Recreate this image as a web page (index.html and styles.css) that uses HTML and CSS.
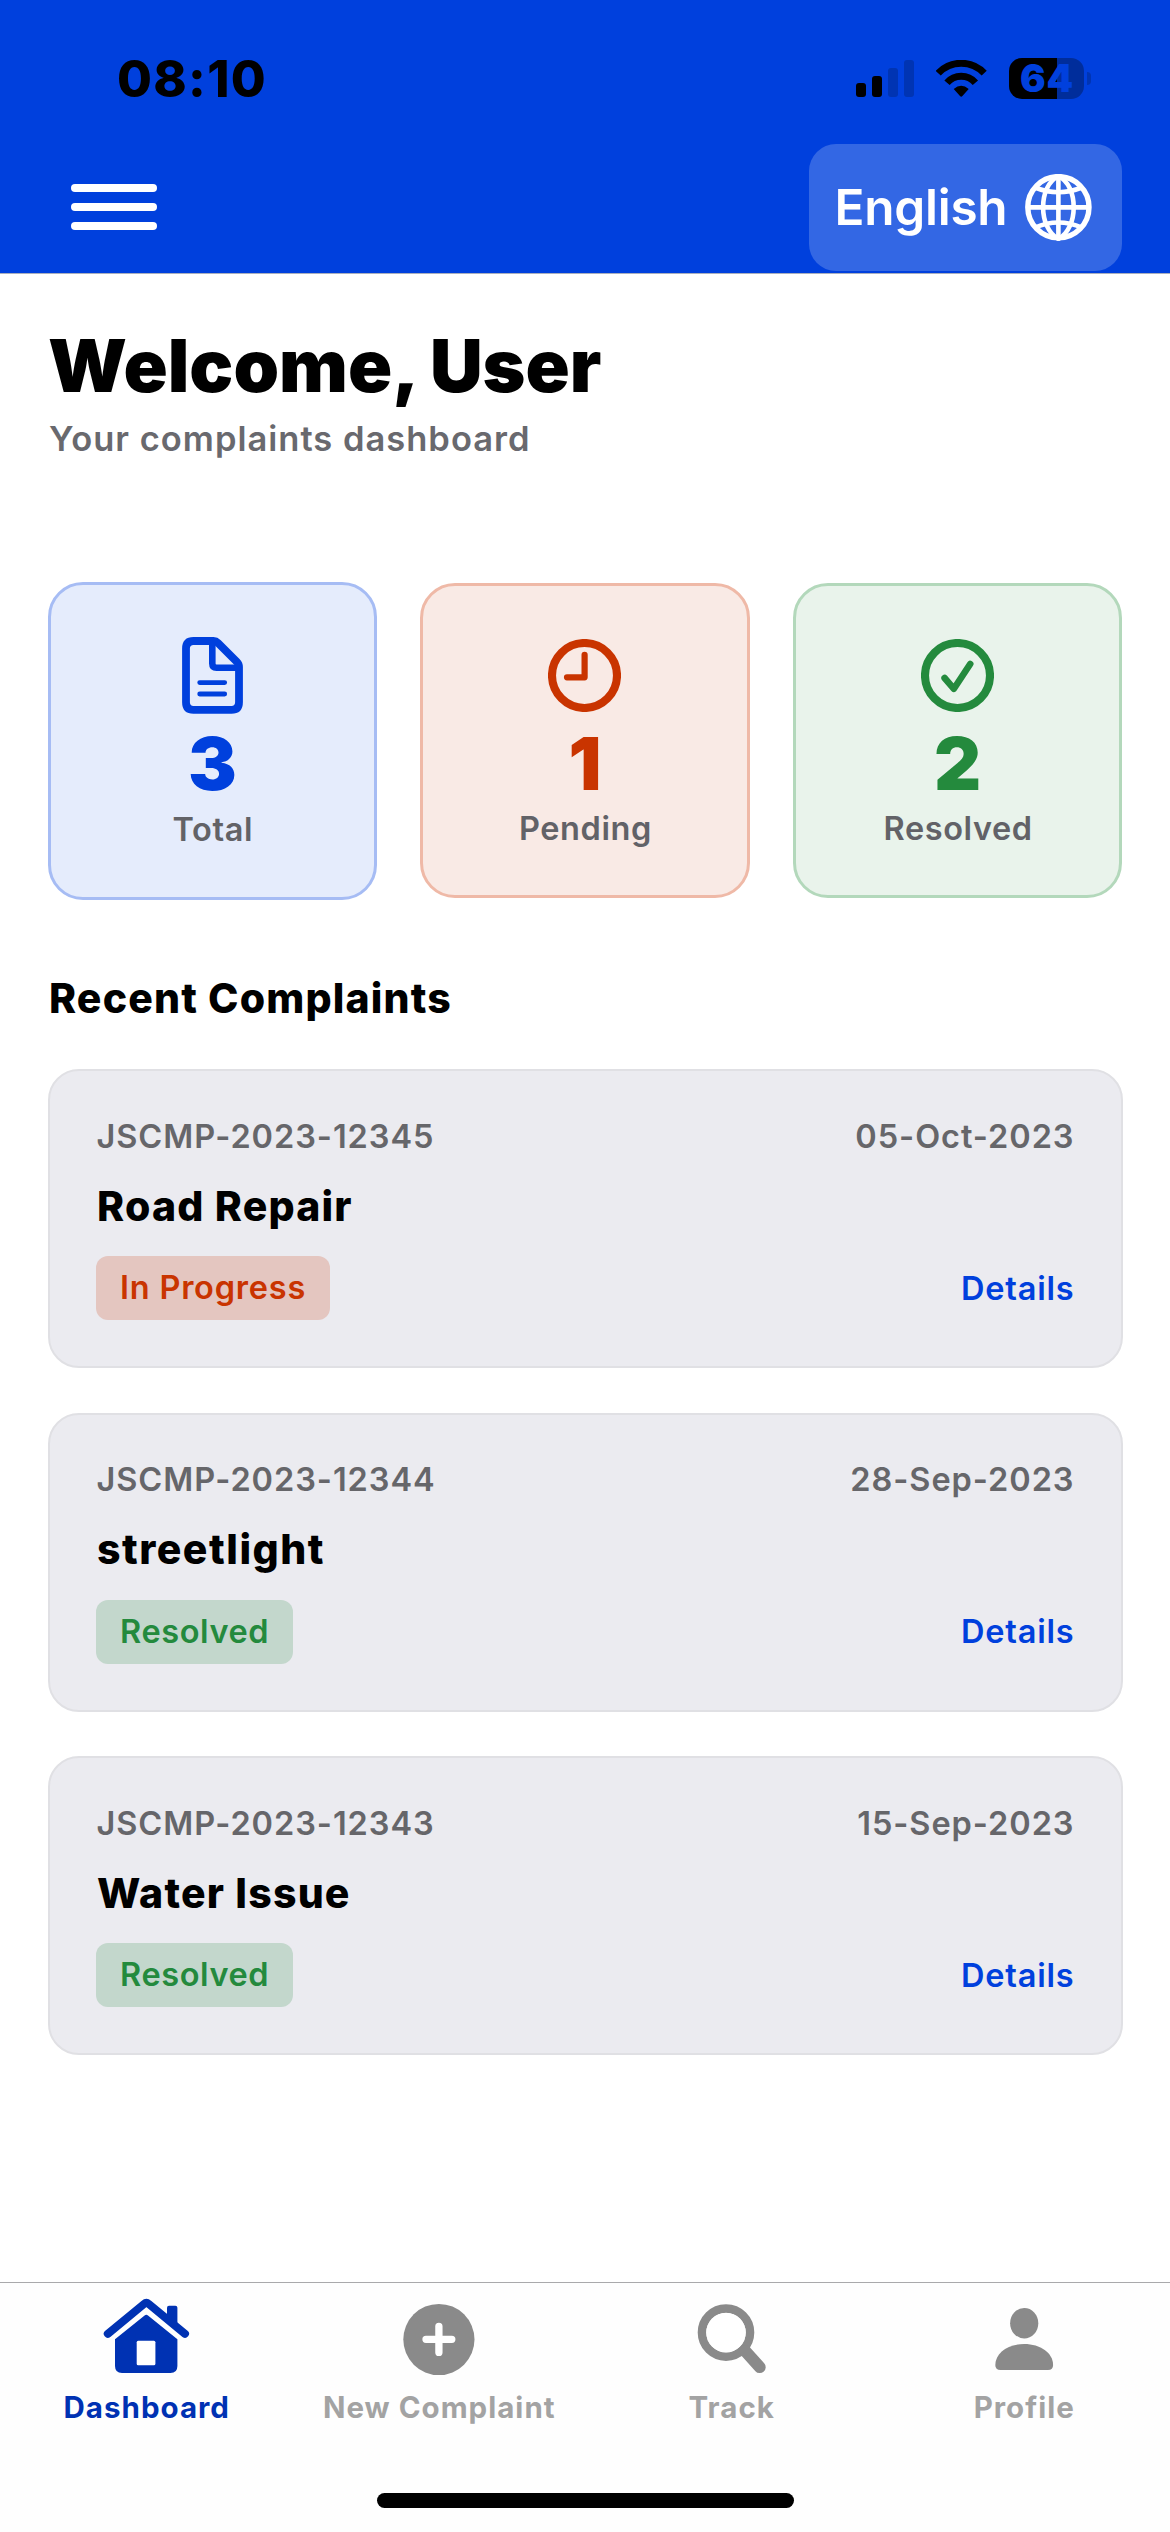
FILE: index.html
```html
<!DOCTYPE html>
<html lang="en">
<head>
<meta charset="utf-8">
<title>Complaints Dashboard</title>
<link rel="stylesheet" href="styles.css">
</head>
<body>
<div class="screen">
  <header class="header">
    <div class="statusbar">
      <span class="time">08:10</span>
      <div class="status-icons">
        <svg width="58" height="37" viewBox="0 0 58 37">
          <rect x="0" y="23" width="10" height="14" rx="3"/>
          <rect x="16" y="16" width="10" height="21" rx="3"/>
          <rect x="32" y="8" width="10" height="29" rx="3" fill="#0034b3"/>
          <rect x="48" y="0" width="10" height="37" rx="3" fill="#0034b3"/>
        </svg>
        <svg width="51" height="37" viewBox="0 0 51 37">
          <g fill="none" stroke="#000">
            <path d="M2.2 13.2A31.6 31.6 0 0 1 48.2 13.2" stroke-width="7"/>
            <path d="M11 22.7A18.8 18.8 0 0 1 39.4 22.7" stroke-width="7"/>
          </g>
          <path d="M17.7 28.9Q25.2 22.5 32.7 28.9L26.4 36Q25.2 37.4 24 36Z"/>
        </svg>
        <div class="battery">
          <span class="battery-level">64</span>
          <span class="battery-cap"></span>
        </div>
      </div>
    </div>
    <div class="toolbar">
      <button class="menu" aria-label="Menu">
        <span class="menu-line"></span>
        <span class="menu-line"></span>
        <span class="menu-line"></span>
      </button>
      <button class="language">
        <span class="language-name">English</span>
        <svg width="67" height="67" viewBox="0 0 67 67" fill="none" stroke="#fff" stroke-width="4.6">
          <circle cx="33.4" cy="33.2" r="30.6" stroke-width="5.4"/>
          <path d="M33.4 2C13 12 13 54 33.4 65C53.8 54 53.8 12 33.4 2Z"/>
          <path d="M33.4 2V65M2 33.4H65"/>
          <path d="M10 13.5Q33.4 23 56.8 13.5M10 53.5Q33.4 43.5 56.8 53.5"/>
        </svg>
      </button>
    </div>
  </header>

  <main class="content">
    <h1 class="welcome">Welcome, User</h1>
    <p class="subtitle">Your complaints dashboard</p>

    <section class="stats">
      <div class="stat stat-total">
        <svg width="61" height="77" viewBox="0 0 61 77" fill="none" stroke="#0040dd" stroke-linecap="round">
          <path d="M11.5 4H31.5Q34 4 36 6L55 25Q57 27 57 30V65.2Q57 72.8 49.4 72.8H11.5Q4 72.8 4 65.2V11.6Q4 4 11.5 4Z" stroke-width="7.8"/>
          <path d="M30.3 6V26.6Q30.3 30.8 34.5 30.8H55" stroke-width="6.6"/>
          <path d="M17.7 45.6H42.7M17.7 57H42.7" stroke-width="4.8"/>
        </svg>
        <span class="stat-value">3</span>
        <span class="stat-label">Total</span>
      </div>
      <div class="stat stat-pending">
        <svg width="73" height="73" viewBox="0 0 73 73" fill="none" stroke="#c93400" stroke-linecap="round" stroke-linejoin="round">
          <circle cx="36.5" cy="36.5" r="32.5" stroke-width="8.1"/>
          <path d="M36.6 15.8V38.3H19" stroke-width="6.2"/>
        </svg>
        <span class="stat-value">1</span>
        <span class="stat-label">Pending</span>
      </div>
      <div class="stat stat-resolved">
        <svg width="73" height="73" viewBox="0 0 73 73" fill="none" stroke="#248a3d" stroke-linecap="round" stroke-linejoin="round">
          <circle cx="36.5" cy="36.5" r="32.5" stroke-width="8.1"/>
          <path d="M23.6 39L32.9 49.8L49.2 25" stroke-width="6.6"/>
        </svg>
        <span class="stat-value">2</span>
        <span class="stat-label">Resolved</span>
      </div>
    </section>

    <h2 class="section-title">Recent Complaints</h2>
    <section class="complaints">
      <article class="complaint">
        <div class="complaint-meta"><span>JSCMP-2023-12345</span><span>05-Oct-2023</span></div>
        <h3 class="complaint-title">Road Repair</h3>
        <div class="complaint-foot"><span class="badge badge-progress">In Progress</span><a class="details">Details</a></div>
      </article>
      <article class="complaint">
        <div class="complaint-meta"><span>JSCMP-2023-12344</span><span>28-Sep-2023</span></div>
        <h3 class="complaint-title complaint-title-wide">streetlight</h3>
        <div class="complaint-foot"><span class="badge badge-resolved">Resolved</span><a class="details">Details</a></div>
      </article>
      <article class="complaint">
        <div class="complaint-meta"><span>JSCMP-2023-12343</span><span>15-Sep-2023</span></div>
        <h3 class="complaint-title">Water Issue</h3>
        <div class="complaint-foot"><span class="badge badge-resolved">Resolved</span><a class="details">Details</a></div>
      </article>
    </section>
  </main>

  <nav class="tabbar">
    <div class="tabs">
      <a class="tab tab-active">
        <svg width="90" height="90" viewBox="0 0 90 90">
          <path d="M6.8 43.8L43 14Q45.4 12 47.8 14L84 43.8" fill="none" stroke="#0032b3" stroke-width="8" stroke-linecap="round"/>
          <path d="M66 33V17.7Q66 15.7 68 15.7H74.4Q76.4 15.7 76.4 17.7V38Z" fill="#0032b3"/>
          <path d="M14 49.3L43.6 25.4Q45.3 24 47 25.4L76.4 49.3V76Q76.4 83 69.4 83H21Q14 83 14 76Z" fill="#0032b3"/>
          <rect x="35.7" y="50.7" width="18.7" height="24.6" rx="1.5" fill="#fff"/>
        </svg>
        <span class="tab-label">Dashboard</span>
      </a>
      <a class="tab">
        <svg width="90" height="90" viewBox="0 0 90 90">
          <circle cx="44.9" cy="49.5" r="35.6" fill="#8a8a8a"/>
          <path d="M32 49.3H57.8M44.9 36.3V62.4" stroke="#fff" stroke-width="7.3" stroke-linecap="round"/>
        </svg>
        <span class="tab-label">New Complaint</span>
      </a>
      <a class="tab">
        <svg width="90" height="90" viewBox="0 0 90 90" fill="none" stroke="#8a8a8a">
          <circle cx="40" cy="42.6" r="24" stroke-width="8.6"/>
          <path d="M59 60.8L73.8 77.2" stroke-width="11.8" stroke-linecap="round"/>
          <circle cx="40" cy="42.6" r="19.8" fill="#fff" stroke="none"/>
        </svg>
        <span class="tab-label">Track</span>
      </a>
      <a class="tab">
        <svg width="90" height="90" viewBox="0 0 90 90" fill="#8a8a8a">
          <ellipse cx="45.2" cy="33.2" rx="14.1" ry="15.2"/>
          <path d="M21.5 80Q16.3 80 16.3 75C16.3 63 29 54 45.2 54S74.1 63 74.1 75Q74.1 80 69 80Z"/>
        </svg>
        <span class="tab-label">Profile</span>
      </a>
    </div>
    <div class="home-indicator"></div>
  </nav>
</div>
</body>
</html>
```
FILE: styles.css
```css
* { box-sizing: border-box; }

body {
  margin: 0;
  background: #fff;
  color: #000;
  font-family: Inter, "Liberation Sans", sans-serif;
}

h1, h2, h3, p { margin: 0; }
button { border: 0; padding: 0; background: none; font: inherit; }
svg { display: block; flex: none; }

.screen {
  width: 1170px;
  height: 2532px;
  display: flex;
  flex-direction: column;
  overflow: hidden;
}

/* Header */
.header {
  height: 274px;
  background: #0040dd;
  border-bottom: 1px solid #a9afbf;
}

.statusbar {
  height: 144px;
  padding: 12px 79px 0 117px;
  display: flex;
  align-items: center;
  justify-content: space-between;
}

.time { font-size: 50.5px; font-weight: 800; letter-spacing: 1.3px; }

.status-icons { display: flex; align-items: center; gap: 22px; }

.battery { display: flex; align-items: center; gap: 3px; }

.battery-level {
  width: 75px;
  height: 41px;
  padding-left: 1px;
  border-radius: 13px;
  background: linear-gradient(90deg, #000 48px, #002d9b 48px);
  color: #0040dd;
  font-size: 38px;
  font-weight: 900;
  line-height: 41px;
  letter-spacing: 0.8px;
  text-align: center;
}

.battery-cap {
  width: 4px;
  height: 13px;
  border-radius: 0 4px 4px 0;
  background: #0034b3;
}

.toolbar {
  padding: 0 48px 0 71px;
  display: flex;
  justify-content: space-between;
}

.menu {
  width: 86px;
  padding-top: 40px;
  display: flex;
  flex-direction: column;
  gap: 11.4px;
}

.menu-line { height: 7.8px; border-radius: 4px; background: #fff; }

.language {
  width: 313px;
  height: 126.5px;
  padding: 0 30px 0 25.5px;
  display: flex;
  align-items: center;
  justify-content: space-between;
  border-radius: 27px;
  background: #3367e4;
}

.language-name {
  color: #fff;
  font-size: 49.5px;
  font-weight: 600;
  letter-spacing: -0.25px;
}

/* Content */
.content { flex: 1; padding: 55px 47.5px 0; }

.welcome {
  padding-left: 0.5px;
  font-size: 73px;
  font-weight: 900;
  line-height: 73px;
  letter-spacing: 0.02px;
}

.subtitle {
  margin-top: 15.5px;
  padding-left: 1.5px;
  color: #69696e;
  font-size: 34.5px;
  font-weight: 600;
  line-height: 42px;
  letter-spacing: 1px;
}

.stats {
  margin-top: 122px;
  display: grid;
  grid-template-columns: repeat(3, 1fr);
  align-items: center;
  gap: 43px;
}

.stat {
  height: 315px;
  padding-top: 52.5px;
  display: flex;
  flex-direction: column;
  align-items: center;
  border: 3px solid;
  border-radius: 35px;
}

.stat-total { height: 318px; color: #0040dd; background: #e5ecfc; border-color: #a6bcf4; }
.stat-pending { color: #c93400; background: #f9eae5; border-color: #efb9a7; }
.stat-resolved { color: #248a3d; background: #e9f3eb; border-color: #b3d8bb; }

.stat-value {
  margin-top: 15px;
  font-size: 73px;
  font-weight: 900;
  line-height: 73px;
}

.stat-total .stat-value { margin-top: 13px; }
.stat-total .stat-label { margin-top: 10px; }

.stat-label {
  margin-top: 9px;
  padding-left: 1px;
  color: #626267;
  font-size: 32.5px;
  font-weight: 600;
  line-height: 40px;
  letter-spacing: 0.6px;
}

.section-title {
  margin-top: 73px;
  padding-left: 1.5px;
  font-size: 41px;
  font-weight: 800;
  line-height: 50px;
  letter-spacing: 1.15px;
}

.complaints {
  margin-top: 46.5px;
  display: flex;
  flex-direction: column;
  gap: 44.5px;
}

.complaint {
  height: 299px;
  padding: 45.5px 46px 0 46.5px;
  border: 2px solid #e0e0e4;
  border-radius: 31px;
  background: #ebebf0;
}

.complaint-meta {
  display: flex;
  justify-content: space-between;
  padding-left: 0.5px;
  color: #66666a;
  font-size: 32.5px;
  font-weight: 600;
  line-height: 40px;
  letter-spacing: 0.95px;
}

.complaint-title {
  margin-top: 24px;
  padding-left: 1px;
  font-size: 41px;
  font-weight: 800;
  line-height: 50px;
  letter-spacing: 1.2px;
}

.complaint-title-wide { letter-spacing: 1.5px; }

.complaint-foot {
  margin-top: 25.5px;
  display: flex;
  align-items: center;
  justify-content: space-between;
}

.badge {
  height: 64px;
  padding: 0 24px;
  border-radius: 12px;
  font-size: 32.5px;
  font-weight: 600;
  line-height: 63px;
  letter-spacing: 0.6px;
}

.badge-progress { color: #c93400; background: #e4c6c0; letter-spacing: 0.78px; }
.badge-resolved { color: #248a3d; background: #c3d7cc; }

.details {
  color: #0040dd;
  font-size: 32.5px;
  font-weight: 600;
  line-height: 63px;
  letter-spacing: 0.8px;
}

/* Bottom navigation */
.tabbar {
  height: 250px;
  border-top: 1px solid #a9a9ab;
  background: #fefefe;
}

.tabs {
  padding-top: 7px;
  display: grid;
  grid-template-columns: repeat(4, 1fr);
}

.tab {
  display: flex;
  flex-direction: column;
  align-items: center;
  color: #a3a3a3;
}

.tab-active { color: #0032b3; }

.tab-label {
  margin-top: 9px;
  padding-left: 1px;
  font-size: 29.5px;
  font-weight: 700;
  line-height: 36px;
  letter-spacing: 1.02px;
}

.home-indicator {
  width: 417px;
  height: 15px;
  margin: 68px auto 0;
  border-radius: 8px;
  background: #000;
}
```
